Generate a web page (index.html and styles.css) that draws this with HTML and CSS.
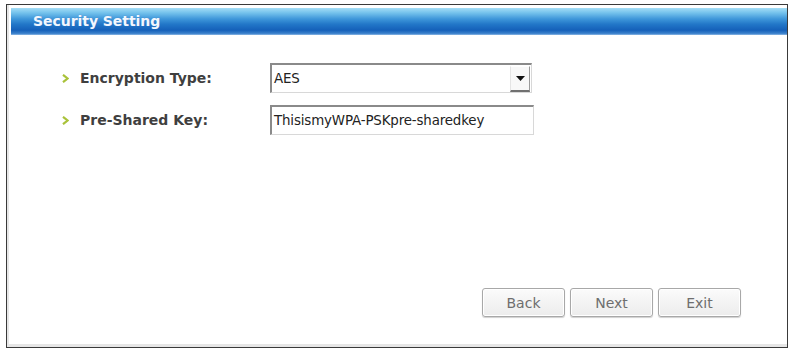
FILE: index.html
```html
<!DOCTYPE html>
<html>
<head>
<meta charset="utf-8">
<link rel="stylesheet" href="styles.css">
</head>
<body>
<div class="frame">
  <div class="header"><span class="title">Security Setting</span></div>
  <div class="form">
    <div class="label">
      <svg class="bullet" width="7" height="9" viewBox="0 0 7 9"><path d="M1 0.8 L5.6 4.5 L1 8.2" fill="none" stroke="#a9c23a" stroke-width="2.2"/></svg>
      <span>Encryption Type:</span>
    </div>
    <div class="select">
      <span class="value">AES</span>
      <span class="drop"><svg width="9" height="5" viewBox="0 0 9 5"><path d="M0 0 H9 L4.5 5 Z" fill="#111"/></svg></span>
    </div>
    <div class="label">
      <svg class="bullet" width="7" height="9" viewBox="0 0 7 9"><path d="M1 0.8 L5.6 4.5 L1 8.2" fill="none" stroke="#a9c23a" stroke-width="2.2"/></svg>
      <span>Pre-Shared Key:</span>
    </div>
    <div class="input"><span class="value">ThisismyWPA-PSKpre-sharedkey</span></div>
  </div>
  <div class="buttons">
    <div class="btn">Back</div>
    <div class="btn">Next</div>
    <div class="btn">Exit</div>
  </div>
</div>
</body>
</html>
```
FILE: styles.css
```css
html, body {
  margin: 0;
  padding: 0;
  background: #fff;
}
body {
  width: 793px;
  height: 351px;
  overflow: hidden;
  font-family: "DejaVu Sans", Verdana, sans-serif;
}
.frame {
  box-sizing: border-box;
  margin: 4px 0 0 6px;
  width: 782px;
  height: 344px;
  border: 1px solid #3a3a3a;
  background: #fff;
  box-shadow: inset 3px -4px 0 -1px #e6e6e6;
  display: flex;
  flex-direction: column;
}
.header {
  margin: 3px 0 0 4px;
  height: 27px;
  background: linear-gradient(to bottom, #a4ddf6 0%, #74c2ec 18%, #3f97da 40%, #2277c8 60%, #1560b9 82%, #3a80cb 94%, #8db8e4 100%);
  display: flex;
  align-items: center;
  padding-left: 22px;
}
.title {
  color: #f2f7ff;
  font-weight: bold;
  font-size: 14px;
  letter-spacing: -0.05px;
  text-shadow: 0 0 1px #3d7cc0;
  margin-top: -2px;
}
.form {
  display: grid;
  grid-template-columns: 208px 264px;
  row-gap: 12px;
  padding: 28px 0 0 55px;
}
.label {
  display: flex;
  align-items: center;
  gap: 11px;
  font-weight: bold;
  font-size: 14px;
  color: #3f3f3f;
  margin-top: -1px;
}
.bullet {
  flex: none;
  margin-top: 1px;
}
.select, .input {
  box-sizing: border-box;
  height: 30px;
  border-top: 2px solid #8a8a8a;
  border-left: 2px solid #8a8a8a;
  border-right: 1px solid #d8d8d8;
  border-bottom: 1px solid #d8d8d8;
  background: #fff;
  display: flex;
  align-items: center;
  font-size: 13.4px;
  color: #222;
}
.select {
  width: 262px;
}
.input {
  width: 264px;
}
.value {
  padding-left: 2px;
  letter-spacing: -0.15px;
}
.drop {
  margin-left: auto;
  margin-right: 1px;
  box-sizing: border-box;
  width: 20px;
  height: 26px;
  display: flex;
  align-items: center;
  justify-content: center;
  background: #f8f8f8;
  border-top: 1px solid #fff;
  border-left: 1px solid #e4e4e4;
  border-right: 1px solid #9a9a9a;
  border-bottom: 2px solid #707070;
}
.buttons {
  margin-top: auto;
  display: flex;
  justify-content: flex-end;
  gap: 5px;
  padding: 0 46px 30px 0;
}
.btn {
  box-sizing: border-box;
  width: 83px;
  height: 29px;
  border: 1px solid #a8a8a8;
  border-radius: 3px;
  background: linear-gradient(to bottom, #fbfbfb, #ececec);
  box-shadow: inset 0 0 0 1px #fff, 0 1px 1px #d0d0d0;
  display: flex;
  align-items: center;
  justify-content: center;
  font-size: 14px;
  color: #6e6e6e;
}
```
